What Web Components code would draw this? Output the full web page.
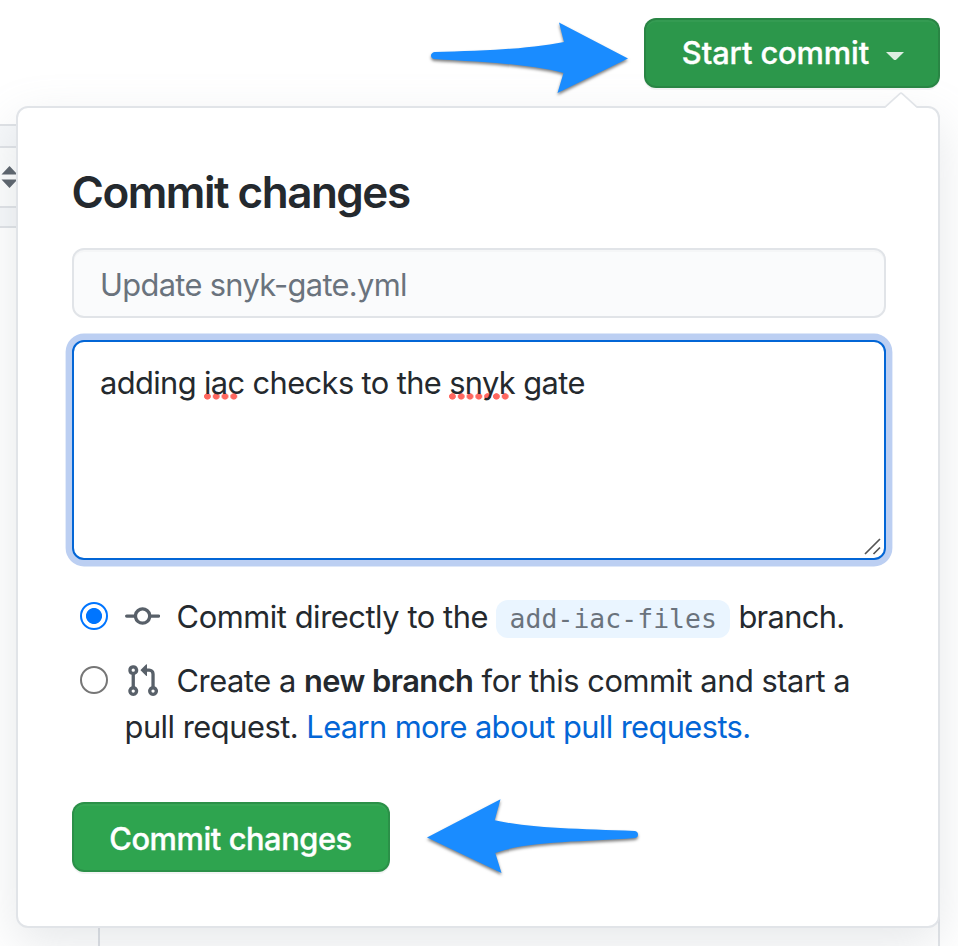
<!DOCTYPE html>
<html lang="en">
<head>
<meta charset="utf-8">
<title>Commit changes</title>
<style>
html,body{margin:0;height:100%;overflow:hidden;background:#fff}
body{font-family:Inter,"Liberation Sans",sans-serif;font-size:30.8px;line-height:46px;color:#24292e}
</style>
</head>
<body>
<commit-page></commit-page>
<script>
function define(name, html, setup) {
  const t = document.createElement('template');
  t.innerHTML = html;
  customElements.define(name, class extends HTMLElement {
    constructor() {
      super();
      this.attachShadow({mode: 'open'}).append(t.content.cloneNode(true));
      if (setup) setup(this, this.shadowRoot);
    }
  });
}

define('green-button', `<style>
:host{display:flex;align-items:center;justify-content:center;box-sizing:border-box;height:70px;border:2px solid rgba(27,31,35,.15);border-radius:12px;background:var(--green,#2ea44f);color:#fff;font-weight:500;-webkit-text-stroke:.35px #fff;white-space:nowrap;box-shadow:0 2px 0 rgba(27,31,35,.05),inset 0 2px 0 rgba(255,255,255,.04)}
</style><slot></slot>`);

define('caret-down', `<style>
:host{display:block;width:18px;height:8px}svg{display:block}
</style><svg width="18" height="8"><path d="M0 0h18l-7.6 7.4q-1.4 1.2-2.8 0z" fill="#fff" opacity=".84"/></svg>`);

define('page-backdrop', `<style>
:host{display:flex;flex-direction:column;height:946px;box-sizing:border-box;padding-top:124px}
.band{height:20px;width:100px;border-top:2px solid #dfe2e6;border-bottom:2px solid #dfe2e6;background:#f6f8fa}
.tools{height:58px;width:100px;background:#fcfdfd;display:flex;align-items:center;padding-left:1px;box-sizing:border-box}
.low{height:18px}
.code{flex:1;display:grid;grid-template-columns:98px 1fr;width:940px;box-sizing:border-box;border-right:2px solid #e1e4e8}
.code i:last-child{border-left:2px solid #dcdfe4}
svg{display:block}
</style>
<div class="band"></div>
<div class="tools"><svg width="17" height="22" fill="#586069"><path d="M.5 8.5 8.5 0l8 8.500zM.5 13.500h16l-8 8.500z"/></svg></div>
<div class="band low"></div>
<div class="code"><i></i><i></i></div>`);

define('pop-over', `<style>
:host{display:flex;flex-direction:column;box-sizing:border-box;width:924px;height:822px;padding:56.500px 52px 0 54px;background:#fff;border:2px solid #e1e4e8;border-radius:12px;box-shadow:0 16px 48px rgba(149,157,165,.23)}
.notch{position:absolute;right:20px;top:-16px;display:block}
</style><svg class="notch" width="34" height="18"><path d="M1 16 15.600 1.800q1.400-1.200 2.800 0L33 16v2H1z" fill="#fff"/><path d="M1 15.200 15.600 1.800q1.400-1.200 2.800 0L33 15.200" fill="none" stroke="#e1e4e8" stroke-width="1.600"/></svg><slot></slot>`);

define('pop-title', `<style>
:host{display:block;font-size:44px;line-height:55px;font-weight:600;white-space:nowrap;letter-spacing:-1.500px;margin-left:-.5px}
</style><slot></slot>`);

define('text-input', `<style>
:host{display:flex;align-items:center;box-sizing:border-box;width:814px;height:70px;margin-top:28.500px;padding:3px 0 0 26px;border:2px solid #e1e4e8;border-radius:12px;background:#fafbfc;color:#6a737d;white-space:nowrap;letter-spacing:-.66px;box-shadow:inset 0 2px 0 rgba(225,228,232,.2)}
</style><span><slot></slot></span>`);

define('text-area', `<style>
:host{display:block;position:relative;box-sizing:border-box;width:814px;height:220px;margin-top:22px;padding:18px 26px;border:2px solid #0366d6;border-radius:12px;background:#fff;white-space:nowrap;letter-spacing:-.6px;box-shadow:0 0 0 6.400px #bccff2}
svg{position:absolute;right:3px;bottom:3px}
</style><slot></slot><svg width="17" height="17" stroke="#555" stroke-width="1.700"><path d="M1 16 16 1M9.500 16 16 9.500"/></svg>`);

define('mis-spelt', `<style>
:host{display:inline;background:radial-gradient(circle at 3.400px 3.600px,#ff675f 0 3px,rgba(255,103,95,0) 3.700px) 0 28.500px/8.800px 7.400px repeat-x;background-size:8.800px 7.400px}
:host([dots="4"]){background-image:linear-gradient(90deg,transparent 34.500px,#fff 34.500px),radial-gradient(circle at 3.400px 3.600px,#ff675f 0 3px,rgba(255,103,95,0) 3.700px);background-size:100% 100%,8.800px 7.400px;background-position:0 0,0 28.500px;background-repeat:no-repeat,repeat-x}
:host([dots="7"]){background-image:linear-gradient(90deg,transparent 61px,#fff 61px),radial-gradient(circle at 3.400px 3.600px,#ff675f 0 3px,rgba(255,103,95,0) 3.700px);background-size:100% 100%,8.800px 7.400px;background-position:0 0,0 28.500px;background-repeat:no-repeat,repeat-x}
</style><slot></slot>`);

define('radio-dot', `<style>
:host{display:block;box-sizing:border-box;width:28px;height:28px;border-radius:50%;border:2px solid #767676;background:#fff;margin:8.500px 16.500px 0 8px;flex:none}
:host([checked]){border-color:#0075ff;background:radial-gradient(circle,#0075ff 7.600px,#fff 8.400px)}
</style>`);

define('commit-option', `<style>
:host{display:flex;align-items:flex-start;white-space:nowrap}
</style><slot name="radio"></slot><div><slot></slot></div>`);

const icons = {
  commit: 'M10.5 7.75a2.5 2.5 0 1 1-5 0 2.5 2.5 0 0 1 5 0zm1.43.75a4.002 4.002 0 0 1-7.86 0H.75a.75.75 0 1 1 0-1.5h3.32a4.001 4.001 0 0 1 7.86 0h3.32a.75.75 0 1 1 0 1.5h-3.32z',
  pull: 'M7.177 3.073L9.573.677A.25.25 0 0110 .854v4.792a.25.25 0 01-.427.177L7.177 3.427a.25.25 0 010-.354zM3.75 2.5a.75.75 0 100 1.5.75.75 0 000-1.5zm-2.25.75a2.25 2.25 0 113 2.122v5.256a2.251 2.251 0 11-1.5 0V5.372A2.25 2.25 0 011.5 3.25zM11 2.5h-1V4h1a1 1 0 011 1v5.628a2.251 2.251 0 101.5 0V5A2.5 2.5 0 0011 2.5zm1 10.25a.75.75 0 111.5 0 .75.75 0 01-1.5 0zM3.75 12a.75.75 0 100 1.5.75.75 0 000-1.5z'
};
for (const k in icons) define('icon-' + k, `<style>
:host{display:inline-block;width:35.200px;height:35.200px;margin-right:16.900px;vertical-align:-6.300px;line-height:0}svg{display:block}
</style><svg width="35.200" height="35.200" viewBox="0 0 16 16" fill="#586069" fill-rule="evenodd"><path d="${icons[k]}"/></svg>`);

define('branch-name', `<style>
:host{display:inline-block;height:38px;padding:0 13.400px;border-radius:12px;background:#eaf5ff;color:#6a737d;font:26.400px/37px "DejaVu Sans Mono","Liberation Mono",monospace;letter-spacing:.06px}
</style><slot></slot>`);

define('pointer-arrow', `<style>
:host{display:block;position:absolute;pointer-events:none}svg{display:block;overflow:visible;filter:drop-shadow(0 2px 1.500px rgba(0,0,0,.5))}
</style><svg fill="#1a8cff"><path/></svg>`, (el, root) => {
  const right = el.getAttribute('dir') !== 'back';
  const svg = root.querySelector('svg');
  svg.setAttribute('width', right ? 197 : 211);
  svg.setAttribute('height', 75);
  root.querySelector('path').setAttribute('d', right
    ? 'M3.500 30C45 29 96 27.500 133 20L128 .5 197 36.500 126.500 71 132.500 51C100 42 50 40 3 37Q0 36 0 33.500T3.500 30Z'
    : 'M0 38.500 73.500.3 67.700 21.300C100 29 150 30 208 32Q211 32.500 211 35.500T208 39C155 43 100 42 68.300 54L74.500 74Z');
});

define('commit-page', `<style>
:host{display:block;position:relative;width:958px;height:946px;overflow:hidden}
.start{position:absolute;left:644px;top:18px;width:296px;padding-left:2px;--green:#2c974b;letter-spacing:-.1px}
.start caret-down{margin:5px 0 0 17px}
pop-over{position:absolute;left:16px;top:106px}
.options{margin-top:33.500px;display:flex;flex-direction:column;gap:18px}
.submit{width:318px;margin-top:52.500px;padding:4px 1px 0 0;letter-spacing:-.43px}
.a1{left:431px;top:22px}.a2{left:427px;top:799px}
.l1{letter-spacing:-.43px}
.l1 span{letter-spacing:-.63px}
.l2{letter-spacing:-.46px}
.l3{letter-spacing:-.48px}
.l3 a{letter-spacing:-.59px}
a{color:#0366d6;text-decoration:none}
b{font-weight:600;letter-spacing:-.52px}
</style>
<page-backdrop></page-backdrop>
<pop-over>
  <pop-title>Commit changes</pop-title>
  <text-input>Update snyk-gate.yml</text-input>
  <text-area><span class="msg">adding <mis-spelt dots="4">iac</mis-spelt> checks to the <mis-spelt dots="7">snyk</mis-spelt> gate</span></text-area>
  <div class="options">
    <commit-option><radio-dot slot="radio" checked></radio-dot><div class="l1"><icon-commit></icon-commit>Commit directly to the <branch-name>add-iac-files</branch-name><span> branch.</span></div></commit-option>
    <commit-option><radio-dot slot="radio"></radio-dot><div class="l2"><icon-pull></icon-pull>Create a <b>new branch</b> for this commit and start a</div><div class="l3">pull request. <a>Learn more about pull requests.</a></div></commit-option>
  </div>
  <green-button class="submit"><span>Commit changes</span></green-button>
</pop-over>
<green-button class="start"><span>Start commit</span><caret-down></caret-down></green-button>
<pointer-arrow class="a1"></pointer-arrow>
<pointer-arrow class="a2" dir="back"></pointer-arrow>`);
</script>
</body>
</html>
